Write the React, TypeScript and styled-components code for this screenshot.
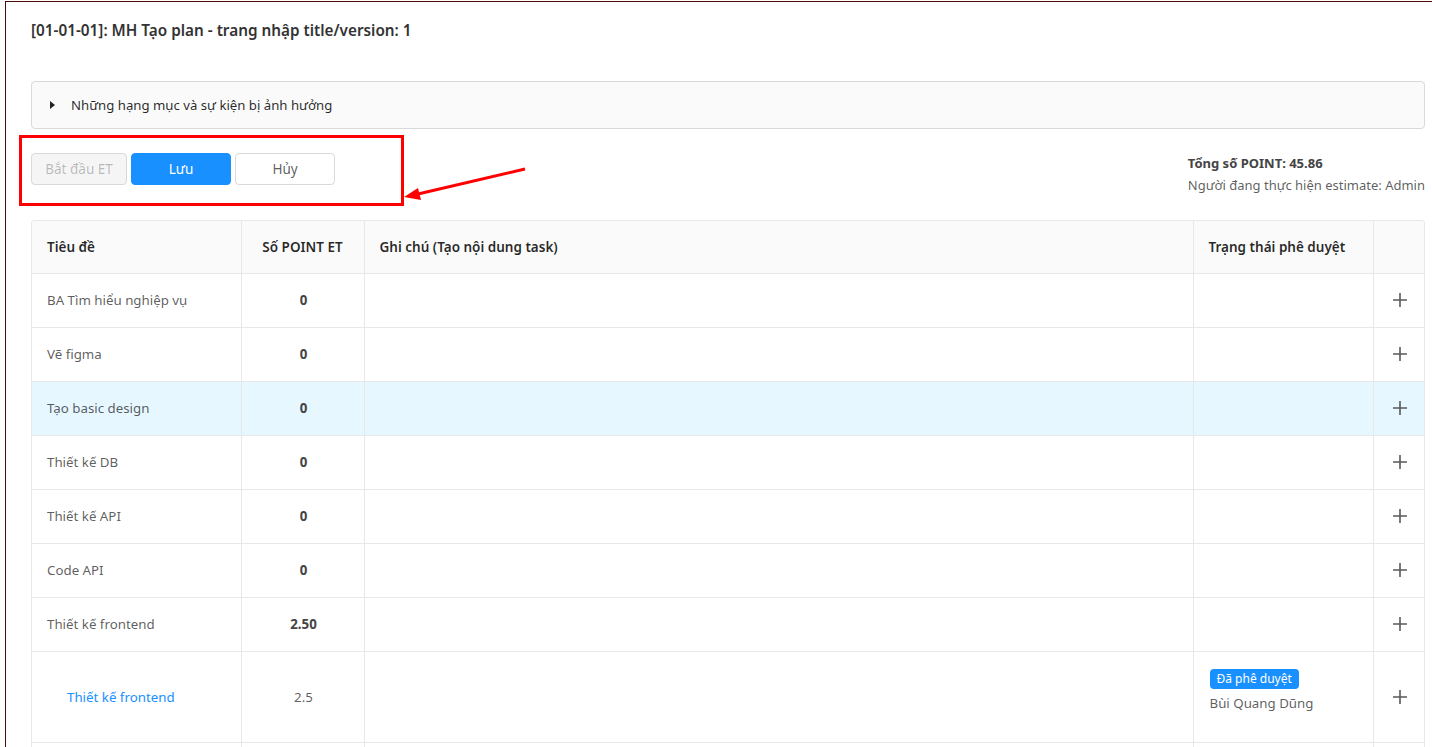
import React from "react";
import styled, { createGlobalStyle } from "styled-components";

const Global = createGlobalStyle`
  html, body { margin: 0; padding: 0; background: #fff; }
  body { font-family: "Noto Sans", "Open Sans", sans-serif; font-size: 14px; color: rgba(0,0,0,0.65); overflow: hidden; }
  * { box-sizing: border-box; }
`;

const Frame = styled.div`
  position: relative;
  margin: 1px 0 0 5px;
  border-top: 1px solid #4a0b0b;
  border-left: 1px solid #4a0b0b;
  padding: 0 7px 0 25px;
  height: 746px;
`;

const Title = styled.h1`
  margin: 0;
  padding-top: 17px;
  height: 79px;
  font-size: 15.3px;
  font-weight: 600;
  color: #333;
  line-height: 22px;
`;

const Collapse = styled.div`
  height: 48px;
  border: 1px solid #d9d9d9;
  border-radius: 4px;
  background: #fafafa;
  display: flex;
  align-items: center;
  padding-left: 18px;
  gap: 16px;
  color: rgba(0,0,0,0.85);
  font-size: 13.2px;
`;

const Caret = styled.span`
  width: 0;
  height: 0;
  border-top: 4px solid transparent;
  border-bottom: 4px solid transparent;
  border-left: 5px solid #222;
`;

const ActionBar = styled.div`
  display: flex;
  justify-content: space-between;
  align-items: flex-start;
  padding-top: 24px;
  height: 91px;
`;

const Buttons = styled.div`
  display: flex;
  gap: 4px;
`;

const Button = styled.button<{ $variant: "disabled" | "primary" | "default" }>`
  height: 32px;
  width: ${(p) => (p.$variant === "disabled" ? "96px" : "100px")};
  border-radius: 4px;
  font-family: inherit;
  font-size: 13.5px;
  border: 1px solid ${(p) => (p.$variant === "primary" ? "#1890ff" : "#d9d9d9")};
  background: ${(p) => (p.$variant === "primary" ? "#1890ff" : p.$variant === "disabled" ? "#f5f5f5" : "#fff")};
  color: ${(p) => (p.$variant === "primary" ? "#fff" : p.$variant === "disabled" ? "rgba(0,0,0,0.25)" : "rgba(0,0,0,0.65)")};
  padding: 0;
`;

const Summary = styled.div`
  margin-top: -1px;
  line-height: 22px;
  font-size: 13px;
  color: rgba(0,0,0,0.65);
`;

const Total = styled.div`
  font-weight: 700;
  color: #444;
`;

const TableWrap = styled.div`
  border: 1px solid #e8e8e8;
  border-radius: 4px 4px 0 0;
  border-bottom: none;
  overflow: hidden;
`;

const Table = styled.table`
  width: 100%;
  border-collapse: collapse;
  table-layout: fixed;
  font-size: 14px;
`;

const Th = styled.th<{ $center?: boolean }>`
  background: #fafafa;
  height: 52px;
  padding: ${(p) => (p.$center ? "0 16px" : "0 16px 0 15px")};
  text-align: ${(p) => (p.$center ? "center" : "left")};
  font-weight: 600;
  color: rgba(0,0,0,0.85);
  font-size: 13.5px;
  border-bottom: 1px solid #e8e8e8;
  border-right: 1px solid #e8e8e8;
  &:last-child { border-right: none; }
`;

const Tr = styled.tr<{ $highlight?: boolean }>`
  background: ${(p) => (p.$highlight ? "#e6f7ff" : "#fff")};
`;

const Td = styled.td<{ $center?: boolean; $bold?: boolean; $top?: boolean; $tall?: boolean }>`
  height: ${(p) => (p.$tall ? "91px" : "54px")};
  padding: ${(p) => (p.$top ? "17px 16px 0" : p.$center ? "0 14px 0 16px" : "0 16px 0 15px")};
  vertical-align: ${(p) => (p.$top ? "top" : "middle")};
  text-align: ${(p) => (p.$center ? "center" : "left")};
  font-weight: ${(p) => (p.$bold ? 700 : 400)};
  color: ${(p) => (p.$bold ? "#444" : "rgba(0,0,0,0.65)")};
  font-size: 13.3px;
  border-bottom: 1px solid #e8e8e8;
  border-right: 1px solid #e8e8e8;
  &:last-child { border-right: none; }
`;

const SubLink = styled.a`
  color: #1890ff;
  padding-left: 20px;
  text-decoration: none;
`;

const Tag = styled.span`
  display: inline-block;
  background: #1890ff;
  color: #fff;
  font-size: 12px;
  line-height: 20px;
  padding: 0 7px;
  border-radius: 4px;
`;

const Approver = styled.div`
  margin-top: 3px;
  line-height: 22px;
`;

const Plus = styled.svg`
  display: block;
  margin: 0 auto;
`;

const Annotation = styled.div`
  position: absolute;
  left: 13px;
  top: 133px;
  width: 385px;
  height: 71px;
  border: 3px solid #ff0000;
  pointer-events: none;
`;

const Arrow = styled.svg`
  position: absolute;
  left: 390px;
  top: 155px;
  pointer-events: none;
`;

const PlusIcon = () => (
  <Plus width="16" height="16" viewBox="0 0 16 16">
    <path d="M8 1v14M1 8h14" stroke="#595959" strokeWidth="1.6" />
  </Plus>
);

const rows = [
  { title: "BA Tìm hiểu nghiệp vụ", point: "0" },
  { title: "Vẽ figma", point: "0" },
  { title: "Tạo basic design", point: "0", highlight: true },
  { title: "Thiết kế DB", point: "0" },
  { title: "Thiết kế API", point: "0" },
  { title: "Code API", point: "0" },
  { title: "Thiết kế frontend", point: "2.50" },
];

export default function App() {
  return (
    <>
      <Global />
      <Frame>
        <Title>[01-01-01]: MH Tạo plan - trang nhập title/version: 1</Title>
        <Collapse>
          <Caret />
          <span>Những hạng mục và sự kiện bị ảnh hưởng</span>
        </Collapse>
        <ActionBar>
          <Buttons>
            <Button $variant="disabled">Bắt đầu ET</Button>
            <Button $variant="primary">Lưu</Button>
            <Button $variant="default">Hủy</Button>
          </Buttons>
          <Summary>
            <Total>Tổng số POINT: 45.86</Total>
            <div>Người đang thực hiện estimate: Admin</div>
          </Summary>
        </ActionBar>
        <TableWrap>
          <Table>
            <colgroup>
              <col style={{ width: 209 }} />
              <col style={{ width: 123 }} />
              <col />
              <col style={{ width: 180 }} />
              <col style={{ width: 51 }} />
            </colgroup>
            <thead>
              <tr>
                <Th>Tiêu đề</Th>
                <Th $center>Số POINT ET</Th>
                <Th>Ghi chú (Tạo nội dung task)</Th>
                <Th>Trạng thái phê duyệt</Th>
                <Th />
              </tr>
            </thead>
            <tbody>
              {rows.map((r) => (
                <Tr key={r.title + r.point} $highlight={r.highlight}>
                  <Td>{r.title}</Td>
                  <Td $center $bold>{r.point}</Td>
                  <Td />
                  <Td />
                  <Td $center><PlusIcon /></Td>
                </Tr>
              ))}
              <Tr>
                <Td $tall><SubLink>Thiết kế frontend</SubLink></Td>
                <Td $tall $center>2.5</Td>
                <Td $tall />
                <Td $tall $top>
                  <Tag>Đã phê duyệt</Tag>
                  <Approver>Bùi Quang Dũng</Approver>
                </Td>
                <Td $tall $center><PlusIcon /></Td>
              </Tr>
              <Tr>
                <Td />
                <Td />
                <Td />
                <Td />
                <Td />
              </Tr>
            </tbody>
          </Table>
        </TableWrap>
        <Annotation />
        <Arrow width="140" height="50" viewBox="0 0 140 50">
          <line x1="129" y1="12" x2="22" y2="37" stroke="#ff0000" strokeWidth="3" />
          <polygon points="8,40 22,31 25,43" fill="#ff0000" />
        </Arrow>
      </Frame>
    </>
  );
}
